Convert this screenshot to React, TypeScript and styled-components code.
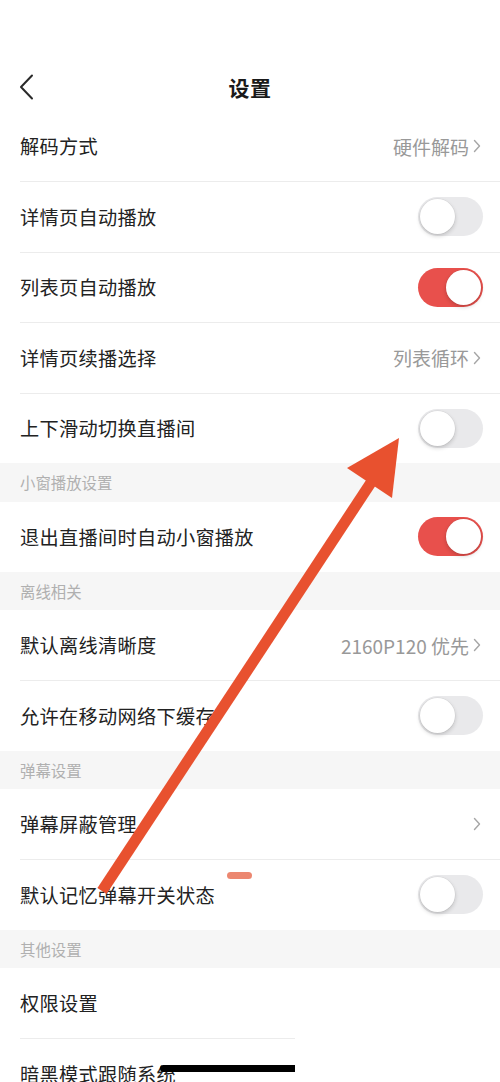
import React from "react";
import styled, { createGlobalStyle } from "styled-components";

const Global = createGlobalStyle`
  html, body { margin: 0; padding: 0; background: #ffffff; }
  body { font-family: "Noto Sans CJK SC", "Noto Sans", sans-serif; -webkit-font-smoothing: antialiased; }
  * { box-sizing: border-box; }
`;

const Page = styled.div`
  position: relative;
  width: 500px;
  height: 1082px;
  overflow: hidden;
  background: #ffffff;
`;

const Header = styled.header`
  height: 111px;
  padding-top: 64px;
`;

const NavBar = styled.div`
  position: relative;
  height: 45px;
  display: flex;
  align-items: center;
  justify-content: center;
`;

const BackButton = styled.div`
  position: absolute;
  left: 19px;
  top: 10px;
  width: 18px;
  height: 26px;
  display: flex;
  align-items: center;
`;

const Title = styled.h1`
  margin: 0;
  font-size: 21px;
  font-weight: 700;
  color: #1a1a1a;
  letter-spacing: 0.5px;
`;

const Row = styled.div`
  height: 70px;
  display: flex;
  align-items: center;
  justify-content: space-between;
  padding: 0 17px 0 20px;
`;

const Label = styled.span`
  font-size: 19.2px;
  color: #222222;
  letter-spacing: 0.3px;
`;

const Value = styled.span`
  display: flex;
  align-items: center;
  gap: 4px;
  font-size: 19px;
  color: #999999;
  padding-right: 2px;
`;

const Divider = styled.div`
  height: 0.5px;
  margin-left: 20px;
  background: #ececec;
`;

const Section = styled.div`
  height: 38.5px;
  display: flex;
  align-items: center;
  padding-left: 20px;
  background: #f6f6f6;
  font-size: 15.4px;
  color: #b0b0b0;
`;

const Track = styled.div<{ $on: boolean }>`
  width: 65px;
  height: 39px;
  border-radius: 20px;
  padding: 2px;
  display: flex;
  justify-content: ${(p) => (p.$on ? "flex-end" : "flex-start")};
  background: ${(p) => (p.$on ? "#e8504c" : "#e9e9eb")};
`;

const Knob = styled.div`
  width: 35px;
  height: 35px;
  border-radius: 50%;
  background: #ffffff;
  box-shadow: 0 2px 4px rgba(0, 0, 0, 0.18), 0 0 0 0.5px rgba(0, 0, 0, 0.06);
`;

const ArrowLayer = styled.svg`
  position: absolute;
  left: 0;
  top: 0;
  width: 500px;
  height: 1082px;
  pointer-events: none;
`;

const Smudge = styled.div`
  position: absolute;
  left: 227px;
  top: 872px;
  width: 25px;
  height: 7px;
  border-radius: 4px;
  background: #ea7a60;
  opacity: 0.9;
`;

const HomeIndicator = styled.div`
  position: absolute;
  left: 160px;
  top: 1065px;
  width: 150px;
  height: 7px;
  border-radius: 4px;
  background: #000000;
`;

const Mask = styled.div`
  position: absolute;
  left: 295px;
  top: 1036px;
  right: 0;
  bottom: 0;
  background: #ffffff;
`;

const Toggle = ({ on }: { on: boolean }) => (
  <Track $on={on}>
    <Knob />
  </Track>
);

const Chevron = () => (
  <svg width="8" height="14" viewBox="0 0 8 14">
    <polyline points="1.5,1.5 6.5,7 1.5,12.5" fill="none" stroke="#a6a6a6" strokeWidth="1.4" strokeLinecap="round" strokeLinejoin="round" />
  </svg>
);

type Item = { label: string; value?: string; toggle?: boolean; arrow?: boolean };
type Group = { title?: string; items: Item[] };

const groups: Group[] = [
  {
    items: [
      { label: "解码方式", value: "硬件解码" },
      { label: "详情页自动播放", toggle: false },
      { label: "列表页自动播放", toggle: true },
      { label: "详情页续播选择", value: "列表循环" },
      { label: "上下滑动切换直播间", toggle: false },
    ],
  },
  { title: "小窗播放设置", items: [{ label: "退出直播间时自动小窗播放", toggle: true }] },
  {
    title: "离线相关",
    items: [
      { label: "默认离线清晰度", value: "2160P120 优先" },
      { label: "允许在移动网络下缓存", toggle: false },
    ],
  },
  {
    title: "弹幕设置",
    items: [
      { label: "弹幕屏蔽管理", arrow: true },
      { label: "默认记忆弹幕开关状态", toggle: false },
    ],
  },
  {
    title: "其他设置",
    items: [
      { label: "权限设置" },
      { label: "暗黑模式跟随系统", toggle: false },
    ],
  },
];

export default function App() {
  return (
    <Page>
      <Global />
      <Header>
        <NavBar>
          <BackButton>
            <svg width="16" height="26" viewBox="0 0 16 26">
              <polyline points="13,1.5 2,13 13,24.5" fill="none" stroke="#2a2a2a" strokeWidth="2" strokeLinecap="round" strokeLinejoin="round" />
            </svg>
          </BackButton>
          <Title>设置</Title>
        </NavBar>
      </Header>
      {groups.map((g, gi) => (
        <React.Fragment key={gi}>
          {g.title && <Section>{g.title}</Section>}
          {g.items.map((it, ii) => (
            <React.Fragment key={it.label}>
              <Row>
                <Label>{it.label}</Label>
                {it.value && (
                  <Value>
                    {it.value}
                    <Chevron />
                  </Value>
                )}
                {it.arrow && (
                  <Value>
                    <Chevron />
                  </Value>
                )}
                {it.toggle !== undefined && <Toggle on={it.toggle} />}
              </Row>
              {ii < g.items.length - 1 && <Divider />}
            </React.Fragment>
          ))}
        </React.Fragment>
      ))}
      <Smudge />
      <HomeIndicator />
      <Mask />
      <ArrowLayer viewBox="0 0 500 1082">
        <line x1="102" y1="891" x2="374" y2="478" stroke="#e8512f" strokeWidth="11" strokeLinecap="butt" />
        <polygon points="399,438 347,468 392,498" fill="#e8512f" />
      </ArrowLayer>
    </Page>
  );
}
